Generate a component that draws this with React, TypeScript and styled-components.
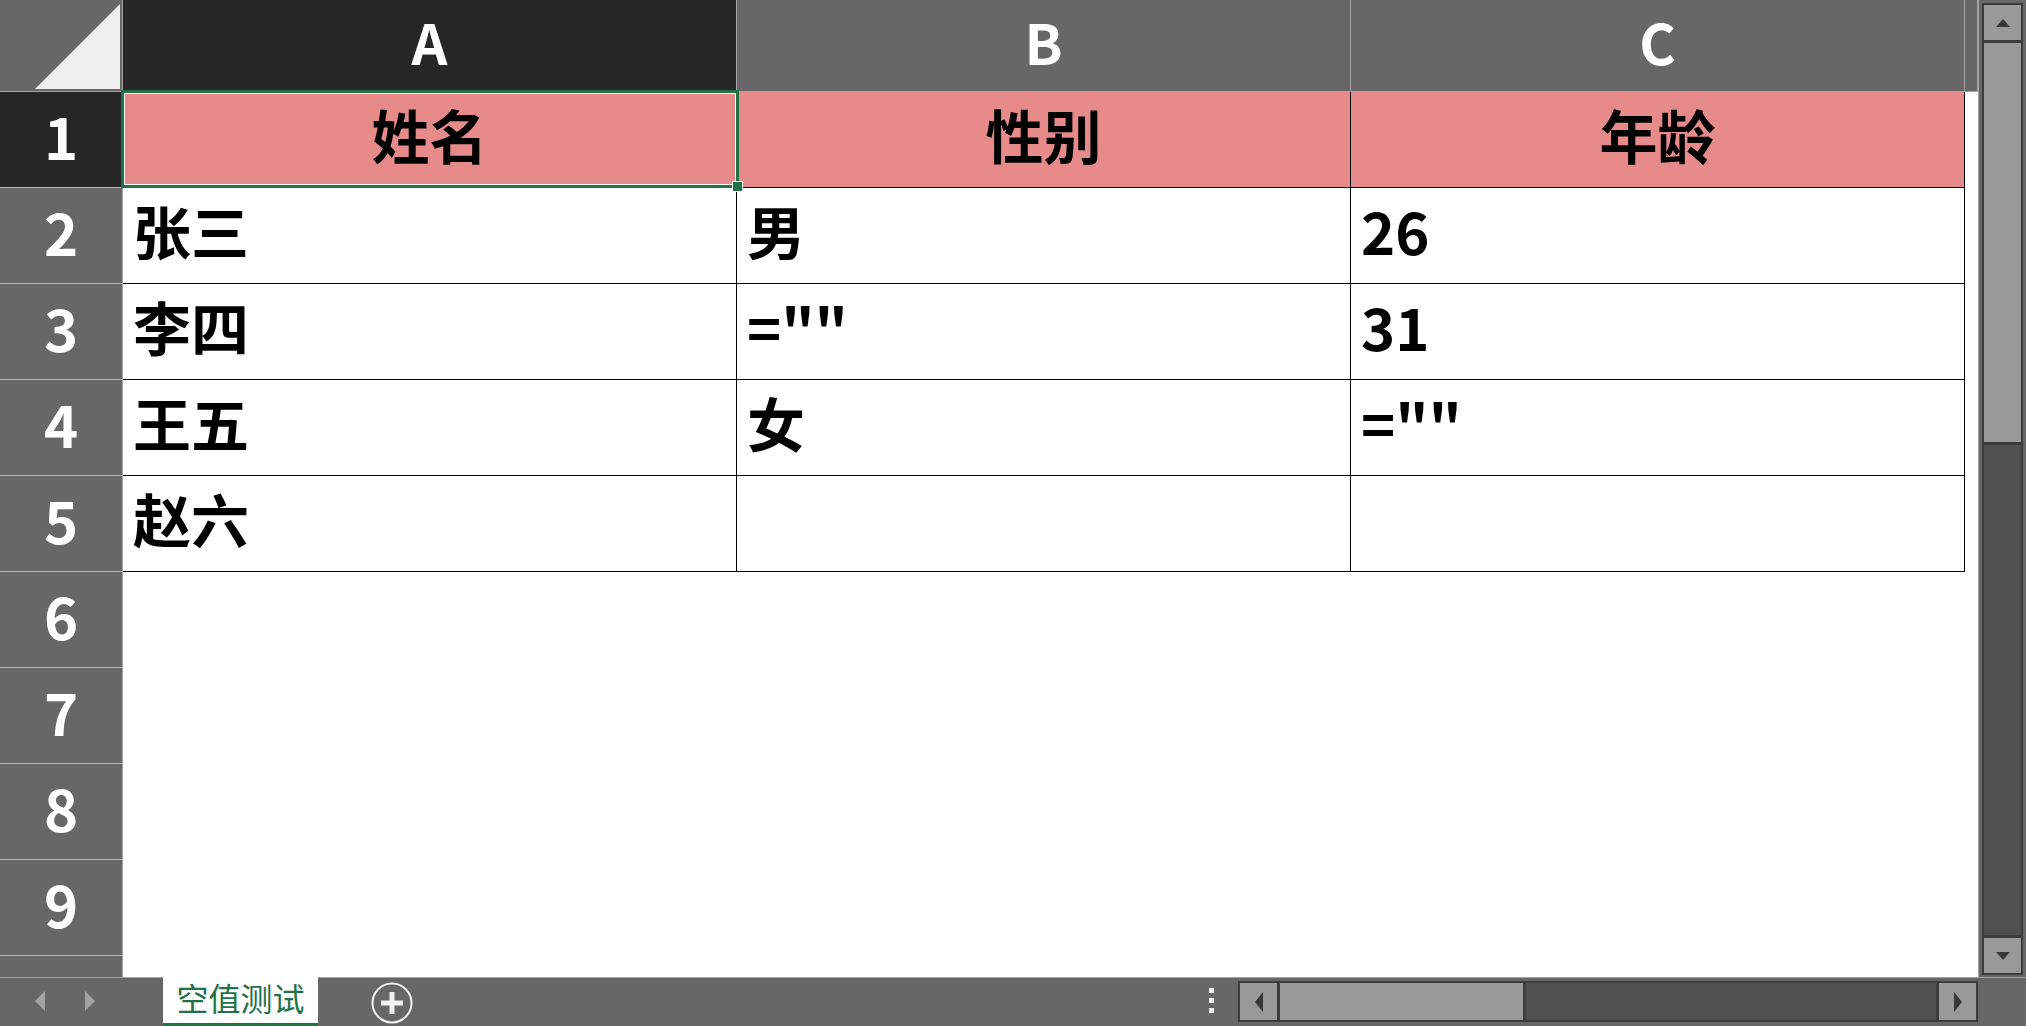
import styled, { createGlobalStyle } from 'styled-components';

const GlobalStyle = createGlobalStyle`
  html, body {
    margin: 0;
    padding: 0;
    background: #676767;
    overflow: hidden;
  }
  * { box-sizing: border-box; }
`;

const FONT = `"Noto Sans CJK SC", "Microsoft YaHei", sans-serif`;

const columns = ['A', 'B', 'C'];

const rows: string[][] = [
  ['姓名', '性别', '年龄'],
  ['张三', '男', '26'],
  ['李四', '=""', '31'],
  ['王五', '女', '=""'],
  ['赵六', '', ''],
];

// row 10 only peeks in under row 9, its number is hidden
const ROW_COUNT = 10;
const VISIBLE_LABELS = 9;

export default function App() {
  return (
    <>
      <GlobalStyle />
      <Page>
        <Main>
          <Sheet>
            <Corner>
              <svg width="122" height="91" viewBox="0 0 122 91">
                <polygon points="120,4 120,89 35,89" fill="#efefef" />
              </svg>
            </Corner>
            {columns.map((c, i) => (
              <ColHeader key={c} active={i === 0}>{c}</ColHeader>
            ))}
            <ColHeader active={false} />

            {Array.from({ length: ROW_COUNT }).map((_, r) => {
              const data = rows[r];
              return [
                <RowHeader key={`h${r}`} active={r === 0}>
                  {r < VISIBLE_LABELS ? r + 1 : ''}
                </RowHeader>,
                ...columns.map((c, ci) => {
                  if (!data) return <Cell key={`${r}${c}`} />;
                  return (
                    <DataCell key={`${r}${c}`} head={r === 0}>
                      {data[ci]}
                      {r === 0 && ci === 0 && (
                        <Selection>
                          <Handle />
                        </Selection>
                      )}
                    </DataCell>
                  );
                }),
                <Cell key={`${r}D`} />,
              ];
            })}
          </Sheet>

          <VScrollArea>
            <VBar>
              <VButton>
                <svg width="14" height="8" viewBox="0 0 14 8">
                  <polygon points="7,0 14,8 0,8" fill="#383838" />
                </svg>
              </VButton>
              <VThumb />
              <Track />
              <VButton bottom>
                <svg width="14" height="8" viewBox="0 0 14 8">
                  <polygon points="0,0 14,0 7,8" fill="#383838" />
                </svg>
              </VButton>
            </VBar>
          </VScrollArea>
        </Main>

        <BottomBar>
          <NavArrows>
            <svg width="10" height="20" viewBox="0 0 10 20">
              <polygon points="10,0 10,20 0,10" fill="#a3a3a3" />
            </svg>
            <svg width="10" height="20" viewBox="0 0 10 20">
              <polygon points="0,0 10,10 0,20" fill="#a3a3a3" />
            </svg>
          </NavArrows>
          <SheetTab>空值测试</SheetTab>
          <AddSheet>
            <svg width="42" height="42" viewBox="0 0 42 42">
              <circle cx="21" cy="21" r="19.5" fill="none" stroke="#f2f2f2" strokeWidth="2" />
              <rect x="10" y="18.5" width="22" height="5" fill="#f2f2f2" />
              <rect x="18.5" y="10" width="5" height="22" fill="#f2f2f2" />
            </svg>
          </AddSheet>
          <Spacer />
          <Dots>
            <Dot />
            <Dot />
            <Dot />
          </Dots>
          <HBar>
            <HButton>
              <svg width="8" height="20" viewBox="0 0 8 20">
                <polygon points="8,0 8,20 0,10" fill="#383838" />
              </svg>
            </HButton>
            <HThumb />
            <Track />
            <HButton right>
              <svg width="8" height="20" viewBox="0 0 8 20">
                <polygon points="0,0 8,10 0,20" fill="#383838" />
              </svg>
            </HButton>
          </HBar>
          <RightGap />
        </BottomBar>
      </Page>
    </>
  );
}

const Page = styled.div`
  width: 2026px;
  height: 1026px;
  display: flex;
  flex-direction: column;
  background: #676767;
  overflow: hidden;
  font-family: ${FONT};
`;

const Main = styled.div`
  display: flex;
  height: 977px;
`;

const Sheet = styled.div`
  display: grid;
  grid-template-columns: 123px repeat(3, 614px) 13px;
  grid-template-rows: 92px repeat(${ROW_COUNT}, 96px);
  width: 1978px;
  height: 977px;
  overflow: hidden;
  background: #ffffff;
`;

const Corner = styled.div`
  background: #676767;
  border-right: 1px solid #a3a3a3;
  border-bottom: 1px solid #a3a3a3;
  svg { display: block; }
`;

const ColHeader = styled.div<{ active: boolean }>`
  display: flex;
  align-items: center;
  justify-content: center;
  background: ${p => (p.active ? '#262626' : '#676767')};
  border-right: 1px solid #a3a3a3;
  border-bottom: 1px solid #a3a3a3;
  color: #ffffff;
  font-size: 56px;
  font-weight: 700;
  line-height: 1;
  padding-bottom: 10px;
  &:last-child { border-right: none; }
`;

const RowHeader = styled.div<{ active: boolean }>`
  display: flex;
  align-items: center;
  justify-content: center;
  background: ${p => (p.active ? '#262626' : '#676767')};
  border-right: 1px solid #a3a3a3;
  border-bottom: 1px solid #b5b5b5;
  color: #ffffff;
  font-size: 58px;
  font-weight: 700;
  line-height: 1;
  padding-bottom: 10px;
`;

const Cell = styled.div`
  background: #ffffff;
`;

const DataCell = styled.div<{ head: boolean }>`
  position: relative;
  display: flex;
  align-items: center;
  justify-content: ${p => (p.head ? 'center' : 'flex-start')};
  padding: 0 10px 12px;
  background: ${p => (p.head ? '#e78a8a' : '#ffffff')};
  border-right: 1px solid #000000;
  border-bottom: 1px solid #000000;
  color: #000000;
  font-size: 58px;
  font-weight: 700;
  line-height: 1;
  white-space: nowrap;
`;

const Selection = styled.div`
  position: absolute;
  z-index: 2;
  left: -2px;
  top: -2px;
  right: -3px;
  bottom: -1px;
  border: 3px solid #217346;
  box-shadow: inset 0 0 0 1px #ffffff;
  pointer-events: none;
`;

const Handle = styled.div`
  position: absolute;
  right: -7px;
  bottom: -7px;
  width: 11px;
  height: 11px;
  background: #217346;
  border: 1px solid #ffffff;
`;

const VScrollArea = styled.div`
  width: 48px;
  height: 977px;
  padding: 3px 3px 2px 3px;
  border-left: 1px solid #a3a3a3;
  background: #676767;
  display: flex;
`;

const VBar = styled.div`
  width: 41px;
  display: flex;
  flex-direction: column;
  background: #505050;
  border: 2px solid #3c3c3c;
`;

const VButton = styled.div<{ bottom?: boolean }>`
  height: 38px;
  flex: none;
  display: flex;
  align-items: center;
  justify-content: center;
  background: #999999;
  border-${p => (p.bottom ? 'top' : 'bottom')}: 3px solid #3c3c3c;
  svg { display: block; }
`;

const VThumb = styled.div`
  height: 402px;
  flex: none;
  background: #999999;
  border-bottom: 3px solid #3c3c3c;
`;

const Track = styled.div`
  flex: 1;
  background: #505050;
`;

const BottomBar = styled.div`
  height: 49px;
  display: flex;
  align-items: stretch;
  border-top: 1px solid #a3a3a3;
  background: #676767;
`;

const NavArrows = styled.div`
  width: 163px;
  display: flex;
  align-items: center;
  padding-left: 35px;
  gap: 40px;
  padding-bottom: 2px;
  svg { display: block; }
`;

const SheetTab = styled.div`
  width: 155px;
  margin-top: -1px;
  display: flex;
  align-items: center;
  justify-content: center;
  background: #ffffff;
  color: #217346;
  font-size: 32px;
  font-weight: 400;
  line-height: 1;
  padding-bottom: 6px;
  border-bottom: 3px solid #217346;
`;

const AddSheet = styled.div`
  margin-left: 53px;
  display: flex;
  align-items: center;
  padding-top: 2px;
  svg { display: block; }
`;

const Spacer = styled.div`
  flex: 1;
`;

const Dots = styled.div`
  width: 30px;
  display: flex;
  flex-direction: column;
  align-items: flex-start;
  justify-content: center;
  gap: 5px;
  padding-left: 1px;
  padding-bottom: 3px;
`;

const Dot = styled.div`
  width: 5px;
  height: 5px;
  background: #eeeeee;
`;

const HBar = styled.div`
  width: 740px;
  margin: 3px 0 4px;
  display: flex;
  background: #505050;
  border: 2px solid #3c3c3c;
`;

const HButton = styled.div<{ right?: boolean }>`
  width: 40px;
  flex: none;
  display: flex;
  align-items: center;
  justify-content: center;
  background: #999999;
  border-${p => (p.right ? 'left' : 'right')}: 3px solid #3c3c3c;
  svg { display: block; }
`;

const HThumb = styled.div`
  width: 246px;
  flex: none;
  background: #999999;
  border-right: 3px solid #3c3c3c;
`;

const RightGap = styled.div`
  width: 48px;
`;
